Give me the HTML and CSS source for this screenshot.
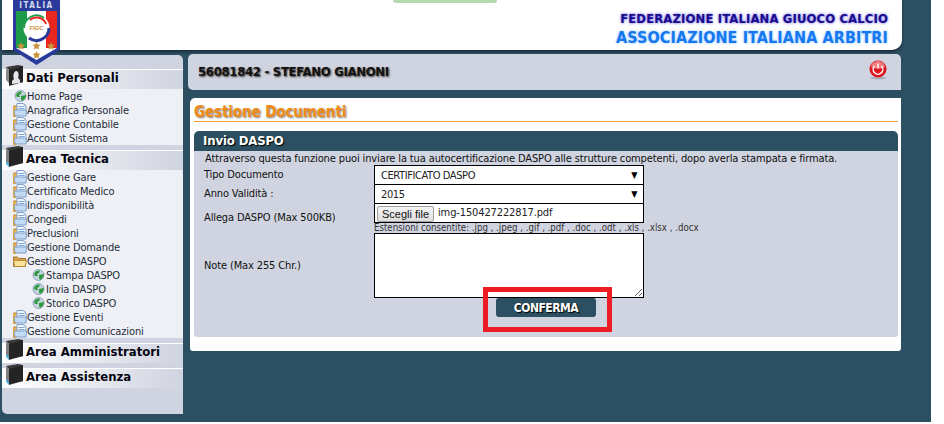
FILE: index.html
```html
<!DOCTYPE html>
<html lang="en">
<head>
    <meta charset="UTF-8">
    <title>Gestione Documenti</title>
    <link rel="stylesheet" href="styles.css">
</head>
<body>
    <!-- Icone riutilizzate nel menu -->
    <svg class="defs" width="0" height="0">
        <symbol id="icoFolder" viewBox="0 0 14 14">
            <path d="M.5 3h4l1-1h7v10.500H.5z" fill="#e6b45c" stroke="#b9842f" stroke-width="1"/>
            <path d="M4 .5h6l3 2.500v6H4z" fill="#f2f7fd" stroke="#7f9fcc" stroke-width="1"/>
            <path d="M5.500 3.500h6M5.500 5.500h6" stroke="#7ea6d8" stroke-width="1"/>
            <path d="M1 7h12.500l-.5 6H2z" fill="#c3daf5" stroke="#7f9fcc" stroke-width="1"/>
            <path d="M.5 3v10.500h3" fill="none" stroke="#d9a54f" stroke-width="1.500"/>
        </symbol>
        <symbol id="icoOpen" viewBox="0 0 14 14">
            <path d="M.5 3h4l1 1.500h7v8H.5z" fill="#d9a64e" stroke="#a8742a" stroke-width="1"/>
            <path d="M.5 6.500h13l-1.500 6H1.500z" fill="#f7e39a" stroke="#b98a3a" stroke-width="1"/>
        </symbol>
        <symbol id="icoGlobe" viewBox="0 0 13 12">
            <circle cx="6.500" cy="6" r="5.500" fill="#c3d3e2" stroke="#8fa5b8" stroke-width="1"/>
            <path d="M2 5c1-3 4-4 6-3.500L7 4 5 5l1 2H3z" fill="#2f9a3c"/>
            <path d="M7 6l5-1c0 3-2 5-4 6l-1-2z" fill="#2f9a3c"/>
        </symbol>
        <symbol id="icoBook" viewBox="0 0 17 21">
            <path d="M0 3l3 2v16l-3-3z" fill="#4fb7e6"/>
            <path d="M0 2l12-2 5 1v16L3 21V5z" fill="#3a3a3a"/>
            <path d="M3 5l14-4v16L3 20z" fill="#242424"/>
            <path d="M0 2l3 3v13l-3-3z" fill="#808080"/>
        </symbol>
        <symbol id="icoUser" viewBox="0 0 17 21">
            <path d="M0 2l12-2 5 1v16L3 21V5z" fill="#3a3a3a"/>
            <path d="M3 5l14-4v16L3 20z" fill="#242424"/>
            <path d="M0 2l3 3v13l-3-3z" fill="#8a8a8a"/>
            <path d="M6 19v-3l2-2c-1-2-1-7 2-8 3 0 3 5 2 7l2 2v3z" fill="#e4e6ec"/>
        </symbol>
    </svg>

    <div class="page">
        <div class="header">
            <div class="header-tab"></div>
            <div class="header-title">
                <div class="fed">FEDERAZIONE ITALIANA GIUOCO CALCIO</div>
                <div class="aia">ASSOCIAZIONE ITALIANA ARBITRI</div>
            </div>
        </div>

        <svg class="logo" viewBox="0 0 47 65" width="47" height="65">
            <path d="M0 0h47v50L23.500 65 0 50z" fill="#2a3a9a"/>
            <path d="M3 11h41v37L23.500 60 3 48z" fill="#fff"/>
            <path d="M3 11h11v37l-11 0z" fill="#1f9a4a"/>
            <path d="M33 11h11v37H33z" fill="#e8281e"/>
            <circle cx="23.500" cy="28" r="13" fill="#fff"/>
            <path d="M11 28a12.500 12.500 0 0 1 20-10" fill="none" stroke="#1f9a4a" stroke-width="2"/>
            <path d="M36 28a12.500 12.500 0 0 1-20 10" fill="none" stroke="#2a3a9a" stroke-width="3"/>
            <path d="M17 20a10 10 0 0 1 16 4" fill="none" stroke="#e8281e" stroke-width="2"/>
            <text x="23.500" y="30" class="logo-figc" text-anchor="middle">FIGC</text>
            <text x="23.500" y="8" class="logo-text" text-anchor="middle">ITALIA</text>
            <g fill="#c9913c">
                <path d="M8 42l1.200 2.500 2.800.3-2 1.900.5 2.800L8 48.200l-2.500 1.300.5-2.800-2-1.900 2.800-.3z"/>
                <path d="M23.500 42l1.200 2.500 2.800.3-2 1.900.5 2.800-2.500-1.300-2.500 1.300.5-2.800-2-1.900 2.800-.3z"/>
                <path d="M38 42l1.200 2.500 2.800.3-2 1.900.5 2.800-2.500-1.300-2.500 1.300.5-2.800-2-1.900 2.800-.3z"/>
                <path d="M23.500 51l1.200 2.500 2.800.3-2 1.900.5 2.800-2.500-1.300-2.500 1.300.5-2.800-2-1.900 2.800-.3z"/>
            </g>
        </svg>

        <div class="main">
            <div class="sidebar">
                <div class="menu-head"><svg class="ico-book"><use href="#icoUser"/></svg>Dati Personali</div>
                <ul class="menu-list">
                    <li class="sub-first"><svg class="ico-globe"><use href="#icoGlobe"/></svg>Home Page</li>
                    <li><svg class="ico-folder"><use href="#icoFolder"/></svg>Anagrafica Personale</li>
                    <li><svg class="ico-folder"><use href="#icoFolder"/></svg>Gestione Contabile</li>
                    <li><svg class="ico-folder"><use href="#icoFolder"/></svg>Account Sistema</li>
                </ul>
                <div class="menu-head head-gap"><svg class="ico-book"><use href="#icoBook"/></svg>Area Tecnica</div>
                <ul class="menu-list">
                    <li><svg class="ico-folder"><use href="#icoFolder"/></svg>Gestione Gare</li>
                    <li><svg class="ico-folder"><use href="#icoFolder"/></svg>Certificato Medico</li>
                    <li><svg class="ico-folder"><use href="#icoFolder"/></svg>Indisponibilità</li>
                    <li><svg class="ico-folder"><use href="#icoFolder"/></svg>Congedi</li>
                    <li><svg class="ico-folder"><use href="#icoFolder"/></svg>Preclusioni</li>
                    <li><svg class="ico-folder"><use href="#icoFolder"/></svg>Gestione Domande</li>
                    <li><svg class="ico-folder"><use href="#icoOpen"/></svg>Gestione DASPO</li>
                    <li class="sub"><svg class="ico-globe"><use href="#icoGlobe"/></svg>Stampa DASPO</li>
                    <li class="sub"><svg class="ico-globe"><use href="#icoGlobe"/></svg>Invia DASPO</li>
                    <li class="sub"><svg class="ico-globe"><use href="#icoGlobe"/></svg>Storico DASPO</li>
                    <li><svg class="ico-folder"><use href="#icoFolder"/></svg>Gestione Eventi</li>
                    <li><svg class="ico-folder"><use href="#icoFolder"/></svg>Gestione Comunicazioni</li>
                </ul>
                <div class="menu-head head-gap"><svg class="ico-book"><use href="#icoBook"/></svg>Area Amministratori</div>
                <div class="menu-head head-gap"><svg class="ico-book"><use href="#icoBook"/></svg>Area Assistenza</div>
            </div>

            <div class="content">
                <div class="user-bar">
                    <span class="user-name">56081842 - STEFANO GIANONI</span>
                    <svg class="power" viewBox="0 0 18 20" width="18" height="20">
                        <ellipse cx="9" cy="18" rx="8" ry="1.500" fill="#a9adb8"/>
                        <circle cx="9" cy="9" r="8.500" fill="#e0141c"/>
                        <path d="M2 7a7 6 0 0 1 14 0c-3 2-11 2-14 0z" fill="#f47a7e"/>
                        <path d="M5.600 6a4.800 4.800 0 1 0 6.800 0" fill="none" stroke="#fff" stroke-width="1.500"/>
                        <path d="M9 3.500v5" stroke="#fff" stroke-width="1.500"/>
                    </svg>
                </div>

                <div class="box">
                    <h1>Gestione Documenti</h1>
                    <div class="panel">
                        <div class="panel-head">Invio DASPO</div>
                        <div class="panel-body">
                            <p class="intro">Attraverso questa funzione puoi inviare la tua autocertificazione DASPO alle strutture competenti, dopo averla stampata e firmata.</p>
                            <div class="form-row">
                                <label>Tipo Documento</label>
                                <div class="field select">CERTIFICATO DASPO<span class="arrow">▼</span></div>
                            </div>
                            <div class="form-row">
                                <label>Anno Validità :</label>
                                <div class="field select">2015<span class="arrow">▼</span></div>
                            </div>
                            <div class="form-row">
                                <label class="label-low">Allega DASPO (Max 500KB)</label>
                                <div class="field file"><button class="file-btn">Scegli file</button><span>img-150427222817.pdf</span></div>
                            </div>
                            <div class="hint">Estensioni consentite: .jpg , .jpeg , .gif , .pdf , .doc , .odt , .xls , .xlsx , .docx</div>
                            <div class="form-row">
                                <label>Note (Max 255 Chr.)</label>
                                <textarea class="note"></textarea>
                            </div>
                            <div class="actions">
                                <button class="confirm">CONFERMA</button>
                                <div class="mark"></div>
                            </div>
                        </div>
                    </div>
                </div>
            </div>
        </div>
    </div>
</body>
</html>
```
FILE: styles.css
```css
body {
    margin: 0;
    background: white;
    font-family: "DejaVu Sans", sans-serif;
    font-stretch: condensed;
    font-size: 11px;
    letter-spacing: -0.13px;
    color: #111;
}
.defs {
    position: absolute;
}
.page {
    position: relative;
    width: 931px;
    height: 422px;
    background: #2c4f62;
    overflow: hidden;
}

/* Testata */
.header {
    display: flex;
    justify-content: flex-end;
    box-sizing: border-box;
    height: 50px;
    margin-left: 2px;
    width: 900px;
    padding: 11px 14px 0 0;
    background: white;
    border-bottom-right-radius: 10px;
    box-shadow: 0 2px 3px rgba(0, 0, 0, 0.4);
}
.header-tab {
    position: absolute;
    left: 393px;
    top: 0;
    width: 104px;
    height: 3px;
    background: #b5d8ae;
    border-radius: 0 0 4px 4px;
}
.header-title {
    text-align: right;
    font-weight: bold;
    letter-spacing: 0.1px;
}
.fed {
    font-size: 13px;
    line-height: 15px;
    color: #1a0a8c;
    text-shadow: 0 0 3px #5a50e0;
}
.aia {
    margin-top: 2px;
    font-size: 16px;
    line-height: 20px;
    color: #1478f0;
    text-shadow: 0 0 3px #8cc0ff;
}
.logo {
    position: absolute;
    left: 13px;
    top: 0;
}
.logo-text {
    font-family: "DejaVu Sans", sans-serif;
    font-size: 8px;
    font-weight: bold;
    letter-spacing: 1.5px;
    fill: #d8dcf0;
}
.logo-figc {
    font-family: "Liberation Sans", sans-serif;
    font-size: 6px;
    font-weight: bold;
    fill: #c9913c;
}

/* Colonne */
.main {
    display: flex;
    align-items: flex-start;
    margin-left: 2px;
}

/* Menu laterale */
.sidebar {
    box-sizing: border-box;
    width: 181px;
    height: 359px;
    margin-top: 5px;
    padding-top: 14px;
    background: #d0d4e0;
    border-radius: 0 5px 0 5px;
}
.menu-head {
    display: flex;
    align-items: center;
    box-sizing: border-box;
    height: 20px;
    padding: 0 0 4px 4px;
    border-top: 1px solid white;
    background: linear-gradient(to right, #fff, #d0d4e0);
    font-size: 13px;
    font-weight: bold;
    letter-spacing: 0;
    color: #050510;
}
.head-gap {
    margin-top: 5px;
}
.ico-book {
    align-self: flex-start;
    width: 17px;
    height: 21px;
    flex: none;
    margin: -5px 3px 0 0;
}
.menu-list {
    list-style: none;
    margin: 0;
    padding: 0;
    background: #eef0f5;
}
.menu-list li {
    display: flex;
    align-items: center;
    height: 14px;
    padding-left: 11px;
    color: #1e2c38;
}
.menu-list .sub-first {
    padding-left: 12px;
}
.menu-list .sub-first .ico-globe {
    margin-right: 0;
}
.menu-list .sub {
    padding-left: 30px;
}
.ico-folder {
    width: 14px;
    height: 14px;
    flex: none;
}
.ico-globe {
    width: 13px;
    height: 12px;
    flex: none;
    margin-right: 1px;
}

/* Contenuto */
.content {
    width: 713px;
    margin-left: 5px;
    margin-top: 4px;
}
.user-bar {
    display: flex;
    justify-content: space-between;
    align-items: flex-start;
    box-sizing: border-box;
    height: 36px;
    padding: 8px 14px 0 10px;
    background: #d0d4e0;
    border-radius: 5px 5px 0 5px;
}
.user-name {
    font-size: 13px;
    line-height: 20px;
    font-weight: bold;
    letter-spacing: -0.3px;
    color: #111;
    text-shadow: 1px 1px 2px #333;
}
.power {
    margin-top: -2px;
}
.box {
    box-sizing: border-box;
    height: 253px;
    margin: 8px 0 0 2px;
    padding: 4px 3px 0 4px;
    background: white;
    border-radius: 5px 0 3px 3px;
}
h1 {
    margin: 0;
    height: 19px;
    font-size: 15px;
    line-height: 20px;
    font-weight: bold;
    letter-spacing: -0.1px;
    color: #f08c14;
    text-shadow: 1px 1px 2px #777;
    border-bottom: 1px solid #f0a030;
}
.panel {
    margin-top: 9px;
}
.panel-head {
    box-sizing: border-box;
    height: 20px;
    padding-left: 9px;
    background: #2c4f62;
    border-radius: 5px 5px 0 0;
    font-size: 13px;
    line-height: 20px;
    font-weight: bold;
    color: white;
    text-shadow: 1px 1px 1px #000;
}
.panel-body {
    box-sizing: border-box;
    height: 186px;
    padding-left: 10px;
    background: #d0d4e0;
    border-radius: 0 0 3px 3px;
}
.intro {
    margin: 0;
    height: 14px;
    padding-left: 1px;
    line-height: 15px;
    white-space: nowrap;
}
.form-row {
    display: flex;
    align-items: center;
}
.form-row label {
    width: 170px;
    flex: none;
}
.form-row .label-low {
    padding-top: 10px;
    line-height: 10px;
}
.field {
    display: flex;
    align-items: center;
    box-sizing: border-box;
    width: 270px;
    border: 1px solid black;
    border-bottom: none;
    background: white;
    color: #222;
}
.select {
    justify-content: space-between;
    height: 19px;
    padding: 0 6px;
    letter-spacing: -0.4px;
}
.arrow {
    font-size: 9px;
    color: black;
}
.file {
    align-items: flex-start;
    height: 20px;
    padding: 2px 0 0 2px;
    border-bottom: 1px solid black;
}
.file-btn {
    box-sizing: border-box;
    width: 57px;
    height: 16px;
    margin-right: 4px;
    padding: 0;
    border: 1px solid #a0a0a0;
    border-radius: 2px;
    background: linear-gradient(#f4f4f4, #dedede);
    font-family: "Liberation Sans", sans-serif;
    font-size: 11px;
    color: #111;
}
.hint {
    height: 10px;
    margin-left: 170px;
    font-size: 9.600px;
    line-height: 10px;
    letter-spacing: 0;
    white-space: nowrap;
    color: #333;
}
.note {
    display: block;
    box-sizing: border-box;
    width: 270px;
    height: 65px;
    margin: 0;
    padding: 2px;
    border: 1px solid black;
    border-radius: 0;
    background: white;
}
.actions {
    position: relative;
    width: 100px;
    margin-left: 292px;
}
.confirm {
    display: block;
    width: 100px;
    height: 19px;
    padding: 0;
    border: none;
    border-radius: 3px;
    background: #2c4f62;
    font-family: "DejaVu Sans", sans-serif;
    font-stretch: condensed;
    font-size: 12px;
    font-weight: bold;
    letter-spacing: -0.5px;
    color: white;
    text-shadow: 1px 1px 1px #000;
}
/* Riquadro rosso sopra il bottone */
.mark {
    position: absolute;
    left: -13px;
    top: -11px;
    box-sizing: border-box;
    width: 129px;
    height: 45px;
    border: 5px solid #ed1c24;
    pointer-events: none;
}
```
